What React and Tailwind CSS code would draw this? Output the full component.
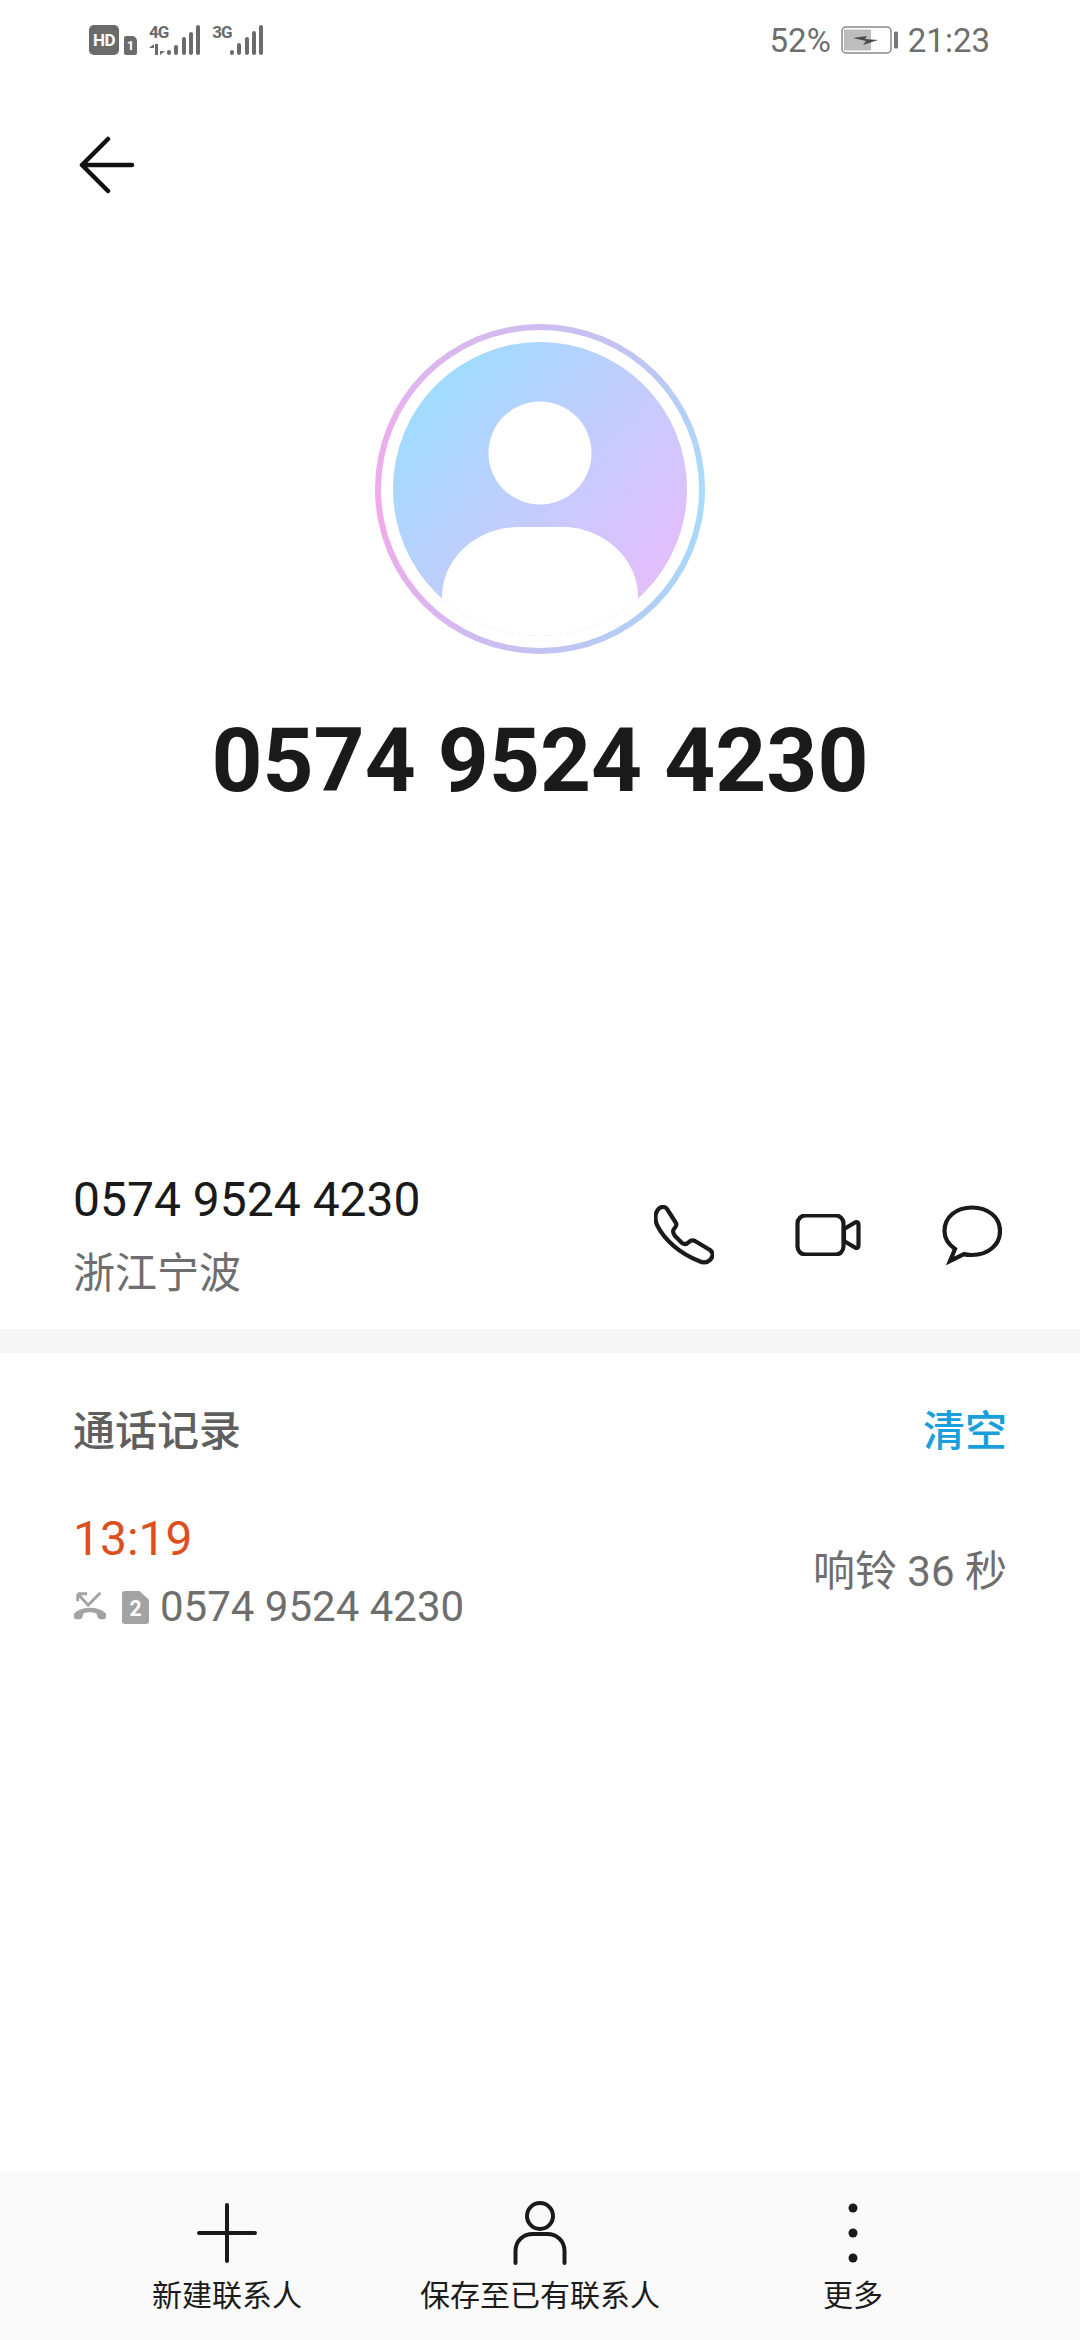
import React from 'react';

const cjk = 'font-["Roboto","Noto_Sans_CJK_SC",sans-serif]';

function SignalBars({ bars }) {
  return (
    <div className="flex items-end gap-[3.3px]">
      {bars.map((h, i) => (
        <div key={i} className="w-[4px] rounded-full bg-[#6b6b6b]" style={{ height: h }} />
      ))}
    </div>
  );
}

function StatusBar() {
  return (
    <div className="flex h-[80px] items-center justify-between pl-[89px] pr-[90px] text-[#6e6e6e]">
      <div className="flex h-[30px] items-end">
        <div className="flex h-[30px] w-[30px] items-center justify-center rounded-[5px] bg-[#6b6b6b] text-[17px] leading-none font-bold tracking-[-0.5px] text-white">HD</div>
        <div className="ml-[5px] flex h-[19px] w-[13px] items-center justify-center rounded-[2px] rounded-tr-[5px] bg-[#6b6b6b] text-[13px] leading-none font-bold text-white">1</div>
        <div className="ml-[12px] flex items-end">
          <div className="flex h-[30px] w-[18px] flex-col justify-between">
            <span className="text-[17px] leading-[15px] font-bold tracking-[-1px] whitespace-nowrap text-[#6b6b6b]">4G</span>
            <svg width="16" height="11" viewBox="0 0 16 11" fill="#6b6b6b">
              <path d="M0 4 L5 0 V4 Z M6 0 H9 V11 H6 Z M11 7 H16 L11 11 Z" />
            </svg>
          </div>
          <SignalBars bars={[5, 10, 18, 23, 30]} />
        </div>
        <div className="ml-[12px] flex items-end">
          <div className="flex h-[30px] w-[18px] flex-col">
            <span className="text-[17px] leading-[15px] font-bold tracking-[-1px] whitespace-nowrap text-[#6b6b6b]">3G</span>
          </div>
          <SignalBars bars={[5, 12, 18, 24, 30]} />
        </div>
      </div>
      <div className="flex items-center text-[33px] leading-none">
        <span>52%</span>
        <svg className="ml-[10px]" width="58" height="30" viewBox="0 0 58 30">
          <rect x="1" y="2" width="49" height="26" rx="4" fill="none" stroke="#8a8a8a" strokeWidth="1.5" />
          <rect x="3" y="4.5" width="27" height="21" fill="#bdbdbd" />
          <path d="M12 13 L26 11 L24 14 L37 15 L22 20 L25 16 Z" fill="#4a4a4a" />
          <rect x="53" y="6.5" width="4" height="17" rx="1.5" fill="#777" />
        </svg>
        <span className="ml-[9px]">21:23</span>
      </div>
    </div>
  );
}

function Avatar() {
  return (
    <div className="rounded-full bg-[conic-gradient(#cdbdf0,#bcc8f4_45deg,#a9dcfb_90deg,#b0d0f6_135deg,#c2c3f2_180deg,#deb4ee_225deg,#f3a9ea_260deg,#e5b3ed_300deg,#cdbdf0)] p-[6px]">
      <div className="rounded-full bg-white p-[12px]">
        <svg className="block" width="294" height="294" viewBox="0 0 294 294">
          <defs>
            <linearGradient id="avatarFill" x1="0.12" y1="0.15" x2="0.85" y2="0.8">
              <stop offset="0" stopColor="#9fdcff" />
              <stop offset="1" stopColor="#e0bffb" />
            </linearGradient>
            <clipPath id="avatarClip">
              <circle cx="147" cy="147" r="147" />
            </clipPath>
          </defs>
          <circle cx="147" cy="147" r="147" fill="url(#avatarFill)" />
          <circle cx="147" cy="111" r="51.5" fill="#fff" />
          <path clipPath="url(#avatarClip)" d="M49 294 V255 C49 215 85 185 125 185 H169 C209 185 245 215 245 255 V294 Z" fill="#fff" />
        </svg>
      </div>
    </div>
  );
}

function ContactActions() {
  return (
    <div className="flex items-center gap-[81px]">
      <svg width="60" height="60" viewBox="3 2 60 60" fill="none" stroke="#1a1a1a" strokeWidth="4.2" strokeLinejoin="round">
        <path d="M6 8 C9 3 14 3 16 6 L25 20 C26 22 25 24 23 26 C21 28 22 30 24 33 L31 40 C34 42 36 41 38 39 C40 37 42 37 44 38 L59 47 C63 50 62 54 59 57 C56 60 52 60 48 58 C30 51 14 38 6 22 C4 17 4 12 6 8 Z" />
      </svg>
      <svg width="66" height="42" viewBox="0 1 66 42" fill="none" stroke="#1a1a1a" strokeWidth="4.2" strokeLinejoin="round">
        <rect x="2.5" y="2.5" width="46" height="39" rx="8" />
        <path d="M49 16 L60 9.5 C62 8.5 63.5 9.5 63.5 11.5 V32.5 C63.5 34.5 62 35.5 60 34.5 L49 28 Z" />
      </svg>
      <svg width="60" height="60" viewBox="0 0 60 60" fill="none" stroke="#1a1a1a" strokeWidth="4.2" strokeLinejoin="miter">
        <path d="M30 2.5 C46 2.5 58 12 58 26 C58 40 46 50 30 50 C27 50 24 50 22 49 L8 56 L13 44 C6 39 2.5 33 2.5 26 C2.5 12 14 2.5 30 2.5 Z" />
      </svg>
    </div>
  );
}

function BottomItem({ label, children }) {
  return (
    <div className="flex w-[313px] flex-col items-center">
      <div className="flex h-[64px] items-center justify-center">{children}</div>
      <span className="mt-[11px] text-[30px] leading-[40px] text-[#1c1c1c]">{label}</span>
    </div>
  );
}

export default function App() {
  return (
    <div className={`flex h-[2340px] w-[1080px] flex-col bg-white ${cjk}`}>
      <StatusBar />

      <div className="flex h-[244px] items-start pl-[79px] pt-[56px]">
        <svg width="56" height="58" viewBox="0 0 56 58" fill="none" stroke="#111" strokeWidth="4.5" strokeLinecap="round" strokeLinejoin="round">
          <path d="M3 29 H53 M29 3 L3 29 L29 55" />
        </svg>
      </div>

      <div className="flex flex-col items-center">
        <Avatar />
        <div className="mt-[55px] text-[89px] leading-[104px] font-bold text-[#1a1a1a]">0574 9524 4230</div>
      </div>

      <div className="mt-[354px] flex items-center justify-between pl-[73px] pr-[78px]">
        <div className="flex flex-col">
          <span className="text-[48px] leading-[66px] text-[#1a1a1a]">0574 9524 4230</span>
          <span className="mt-[13px] text-[42px] leading-[56px] text-[#6e6e6e]">浙江宁波</span>
        </div>
        <ContactActions />
      </div>

      <div className="mt-[27px] h-[24px] bg-[#f6f6f6]" />

      <div className="mt-[51px] flex items-center justify-between px-[73px]">
        <span className="text-[42px] leading-[56px] font-medium text-[#5f5f5f]">通话记录</span>
        <span className="text-[42px] leading-[56px] font-medium text-[#1a9fdc]">清空</span>
      </div>

      <div className="mt-[48px] flex items-center justify-between px-[73px]">
        <div className="flex flex-col">
          <span className="text-[48px] leading-[62px] text-[#dd4f1f]">13:19</span>
          <div className="mt-[9px] flex items-center">
            <svg width="34" height="32" viewBox="0 0 36 32" fill="#a3a3a3">
              <path d="M2 22 C10 15 26 15 34 22 C36 24 35 29 33 29 C30 29 27 29 26 27 L25 23 C21 21 15 21 11 23 L10 27 C9 29 6 29 3 29 C1 29 0 24 2 22 Z" />
              <path d="M5 2 L16 14 L29 1 M5 2 H15 M5 2 V10" fill="none" stroke="#a3a3a3" strokeWidth="3" />
            </svg>
            <svg className="ml-[15px]" width="27" height="33" viewBox="0 0 28 34">
              <path d="M3 0 H18 L28 9 V31 C28 33 27 34 25 34 H3 C1 34 0 33 0 31 V3 C0 1 1 0 3 0 Z" fill="#a3a3a3" />
              <text x="14" y="26" textAnchor="middle" fontSize="22" fontWeight="700" fill="#fff" fontFamily="Roboto">2</text>
            </svg>
            <span className="ml-[11px] text-[42px] leading-[56px] text-[#6e6e6e]">0574 9524 4230</span>
          </div>
        </div>
        <span className="text-[42px] leading-[56px] text-[#6e6e6e]">响铃 36 秒</span>
      </div>

      <div className="mt-auto flex h-[168px] justify-center bg-[#fafafa] pt-[29px]">
        <BottomItem label="新建联系人">
          <svg width="60" height="60" viewBox="0 0 60 60" stroke="#1a1a1a" strokeWidth="4" strokeLinecap="round">
            <path d="M30 2 V58 M2 30 H58" />
          </svg>
        </BottomItem>
        <BottomItem label="保存至已有联系人">
          <svg width="54" height="64" viewBox="0 0 54 64" fill="none" stroke="#1a1a1a" strokeWidth="4" strokeLinecap="round">
            <circle cx="27" cy="15" r="13" />
            <path d="M2.5 62 V50 C2.5 40 10 33 20 33 H34 C44 33 51.5 40 51.5 50 V62" />
          </svg>
        </BottomItem>
        <BottomItem label="更多">
          <svg width="10" height="60" viewBox="0 0 10 60" fill="#1a1a1a">
            <circle cx="5" cy="5" r="4.5" />
            <circle cx="5" cy="30" r="4.5" />
            <circle cx="5" cy="55" r="4.5" />
          </svg>
        </BottomItem>
      </div>
    </div>
  );
}
